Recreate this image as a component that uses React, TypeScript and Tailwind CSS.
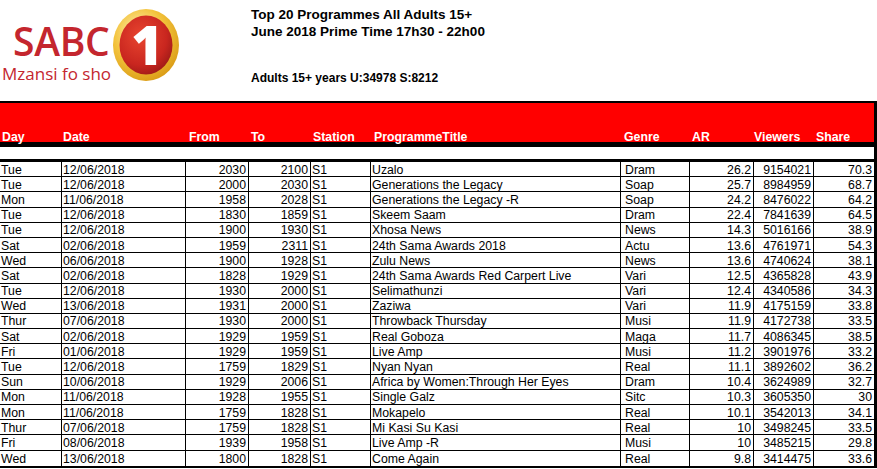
import { memo } from "react";

const cols = "grid grid-cols-[61px_124px_63px_62px_60px_250px_69px_64px_60px_61px]";

const rows = [
  ["Tue", "12/06/2018", "2030", "2100", "S1", "Uzalo", "Dram", "26.2", "9154021", "70.3"],
  ["Tue", "12/06/2018", "2000", "2030", "S1", "Generations the Legacy", "Soap", "25.7", "8984959", "68.7"],
  ["Mon", "11/06/2018", "1958", "2028", "S1", "Generations the Legacy -R", "Soap", "24.2", "8476022", "64.2"],
  ["Tue", "12/06/2018", "1830", "1859", "S1", "Skeem Saam", "Dram", "22.4", "7841639", "64.5"],
  ["Tue", "12/06/2018", "1900", "1930", "S1", "Xhosa News", "News", "14.3", "5016166", "38.9"],
  ["Sat", "02/06/2018", "1959", "2311", "S1", "24th Sama Awards 2018", "Actu", "13.6", "4761971", "54.3"],
  ["Wed", "06/06/2018", "1900", "1928", "S1", "Zulu News", "News", "13.6", "4740624", "38.1"],
  ["Sat", "02/06/2018", "1828", "1929", "S1", "24th Sama Awards Red Carpert Live", "Vari", "12.5", "4365828", "43.9"],
  ["Tue", "12/06/2018", "1930", "2000", "S1", "Selimathunzi", "Vari", "12.4", "4340586", "34.3"],
  ["Wed", "13/06/2018", "1931", "2000", "S1", "Zaziwa", "Vari", "11.9", "4175159", "33.8"],
  ["Thur", "07/06/2018", "1930", "2000", "S1", "Throwback Thursday", "Musi", "11.9", "4172738", "33.5"],
  ["Sat", "02/06/2018", "1929", "1959", "S1", "Real Goboza", "Maga", "11.7", "4086345", "38.5"],
  ["Fri", "01/06/2018", "1929", "1959", "S1", "Live Amp", "Musi", "11.2", "3901976", "33.2"],
  ["Tue", "12/06/2018", "1759", "1829", "S1", "Nyan Nyan", "Real", "11.1", "3892602", "36.2"],
  ["Sun", "10/06/2018", "1929", "2006", "S1", "Africa by Women:Through Her Eyes", "Dram", "10.4", "3624989", "32.7"],
  ["Mon", "11/06/2018", "1928", "1955", "S1", "Single Galz", "Sitc", "10.3", "3605350", "30"],
  ["Mon", "11/06/2018", "1759", "1828", "S1", "Mokapelo", "Real", "10.1", "3542013", "34.1"],
  ["Thur", "07/06/2018", "1759", "1828", "S1", "Mi Kasi Su Kasi", "Real", "10", "3498245", "33.5"],
  ["Fri", "08/06/2018", "1939", "1958", "S1", "Live Amp -R", "Musi", "10", "3485215", "29.8"],
  ["Wed", "13/06/2018", "1800", "1828", "S1", "Come Again", "Real", "9.8", "3414475", "33.6"],
];

// right aligned columns: From, To, AR, Viewers, Share
const rightCols = [2, 3, 7, 8, 9];

const Logo = () => (
  <div className="relative w-[251px] h-[101px] text-[#c4262e] font-['Open_Sans',sans-serif]">
    <span className="absolute left-[13px] top-[26px] text-[39px] leading-[30px] font-semibold tracking-[-0.3px]">
      SABC
    </span>
    <span className="absolute left-[2px] top-[66px] text-[17px] leading-[15px]">
      Mzansi fo sho
    </span>
    <svg width="70" height="76" viewBox="0 0 70 76" className="absolute left-[111px] top-[7px]">
      <defs>
        <radialGradient id="gold" cx="40%" cy="35%" r="70%">
          <stop offset="0%" stopColor="#fff5c4" />
          <stop offset="55%" stopColor="#f3c33c" />
          <stop offset="100%" stopColor="#d99a14" />
        </radialGradient>
        <radialGradient id="red" cx="40%" cy="35%" r="70%">
          <stop offset="0%" stopColor="#e8452f" />
          <stop offset="70%" stopColor="#c9261f" />
          <stop offset="100%" stopColor="#9e1a17" />
        </radialGradient>
      </defs>
      <ellipse cx="35" cy="38" rx="33" ry="36" fill="url(#gold)" />
      <ellipse cx="35" cy="38" rx="26.5" ry="29.5" fill="url(#red)" />
      <text
        x="36"
        y="58"
        textAnchor="middle"
        fill="#ffffff"
        fontFamily="Open Sans, sans-serif"
        fontWeight="800"
        fontSize="54"
      >
        1
      </text>
    </svg>
  </div>
);

const App = () => {
  return (
    <div className="w-[877px] h-[469px] bg-white overflow-hidden font-['Liberation_Sans',Arial,sans-serif] text-black">
      <div className="flex h-[101px]">
        <Logo />
        <div className="flex flex-col pt-[6px] font-bold">
          <span className="text-[13.5px] leading-[17px]">Top 20 Programmes All Adults 15+</span>
          <span className="text-[13.5px] leading-[17px]">June 2018 Prime Time 17h30 - 22h00</span>
          <span className="mt-[31px] text-[12px] leading-[14px]">Adults 15+ years U:34978 S:8212</span>
        </div>
      </div>

      <div className="w-[877px] border-t-[2px] border-r-[3px] border-b-[2px] border-black">
        <div className={`${cols} h-[39px] bg-[#ff0000] text-white font-bold text-[12.3px] leading-[10px]`}>
          <span className="self-end pl-[2px]">Day</span>
          <span className="self-end pl-[2px]">Date</span>
          <span className="self-end pl-[4px]">From</span>
          <span className="self-end pl-[3px]">To</span>
          <span className="self-end pl-[3px]">Station</span>
          <span className="self-end pl-[4px]">ProgrammeTitle</span>
          <span className="self-end pl-[4px]">Genre</span>
          <span className="self-end pl-[3px]">AR</span>
          <span className="self-end pl-[1px]">Viewers</span>
          <span className="self-end pl-[3px]">Share</span>
        </div>
        <div className="h-[5px] bg-black" />
        <div className="h-[12px] bg-white" />
        <div className="h-[3px] bg-black" />

        {rows.map((r, i) => (
          <div
            key={i}
            className={`${cols} h-[15.2px] text-[12.3px] leading-[14px] ${
              i < rows.length - 1 ? "border-b border-black" : ""
            }`}
          >
            {r.map((c, j) => (
              <span
                key={j}
                className={`flex items-center pt-[1px] whitespace-nowrap overflow-hidden ${
                  j > 0 ? "border-l border-black" : ""
                } ${
                  rightCols.includes(j)
                    ? "justify-end pr-[2px]"
                    : j === 6
                    ? "pl-[4px]"
                    : "pl-[1px]"
                }`}
              >
                {c}
              </span>
            ))}
          </div>
        ))}
      </div>
    </div>
  );
};

export default memo(App);
